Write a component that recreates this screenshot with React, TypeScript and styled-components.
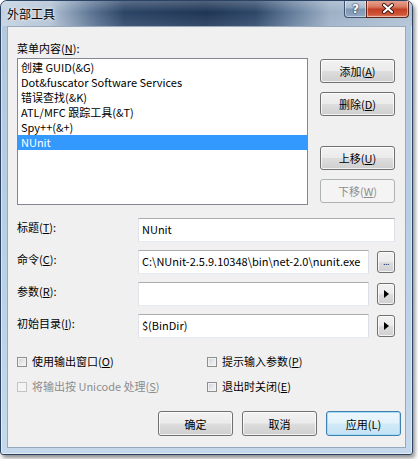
import React from "react";
import styled, { createGlobalStyle, css } from "styled-components";

const Global = createGlobalStyle`
  html, body { margin: 0; padding: 0; background: #ffffff; }
  body {
    font-family: "Noto Sans CJK SC", "Noto Sans", sans-serif;
    font-size: 11px;
    color: #000;
  }
  #root { width: 418px; height: 459px; }
`;

const Window = styled.div`
  box-sizing: border-box;
  width: 413px;
  height: 455px;
  border: 1px solid #2c4463;
  border-radius: 7px 7px 3px 3px;
  background: linear-gradient(to bottom, #b4c8dc 0%, #b9cfe6 55%, #c6d9ec 100%);
  box-shadow: 2px 3px 4px rgba(0, 0, 0, 0.45), inset 0 0 0 1px rgba(255, 255, 255, 0.5);
  display: flex;
  flex-direction: column;
  overflow: hidden;
`;

const TitleBar = styled.div`
  height: 25px;
  flex: none;
  display: flex;
  align-items: flex-start;
  padding-left: 6px;
  border-radius: 6px 6px 0 0;
  background:
    linear-gradient(to bottom, rgba(255, 255, 255, 0.22), rgba(255, 255, 255, 0) 45%, rgba(255, 255, 255, 0.1)),
    linear-gradient(to right, #c3d2e2 0%, #b0c1d4 12%, #5d7594 22%, #2c4466 30%, #1f3656 50%, #2e4769 62%, #5f7897 70%, #9cb0c6 80%, #b0c2d6 100%);
`;

const Caption = styled.div`
  font-size: 12px;
  line-height: 25px;
  color: #000;
  text-shadow: 0 0 5px rgba(255, 255, 255, 0.95), 0 0 2px rgba(255, 255, 255, 0.9);
`;

const CaptionButtons = styled.div`
  margin-left: auto;
  margin-right: 3px;
  margin-top: -1px;
  display: flex;
`;

const CaptionButton = styled.div<{ $close?: boolean }>`
  box-sizing: border-box;
  height: 18px;
  width: ${(p) => (p.$close ? "43px" : "23px")};
  display: flex;
  align-items: center;
  justify-content: center;
  border: 1px solid ${(p) => (p.$close ? "#5a2418" : "#3c5270")};
  border-top: none;
  border-radius: ${(p) => (p.$close ? "0 0 4px 0" : "0 0 0 4px")};
  margin-left: ${(p) => (p.$close ? "-1px" : "0")};
  box-shadow: inset 0 0 0 1px rgba(255, 255, 255, 0.45);
  color: #fff;
  font-family: "DejaVu Sans", sans-serif;
  font-weight: bold;
  font-size: 12px;
  text-shadow: 0 0 2px #1b2a3e, 0 0 1px #1b2a3e;
  ${(p) =>
    p.$close
      ? css`
          background: linear-gradient(to bottom, #e8a796 0%, #d87a62 40%, #c43f26 55%, #cf5536 85%, #e0866a 100%);
        `
      : css`
          background: linear-gradient(to bottom, #c6d3e1 0%, #a9bbcf 45%, #7f97b3 55%, #90a8c2 100%);
        `}
`;

const Client = styled.div`
  flex: 1;
  margin: 0 6px 6px 6px;
  border: 1px solid #97a9bf;
  background: #f0f0f0;
  padding: 13px 4px 11px 9px;
  display: flex;
  flex-direction: column;
`;

const SectionLabel = styled.div`
  height: 16px;
  line-height: 16px;
  font-size: 11px;
  margin-bottom: 2px;
`;

const Key = styled.span`
  text-decoration: underline;
  text-underline-offset: 1px;
`;

const TopRow = styled.div`
  display: flex;
  padding-right: 5px;
`;

const ListBox = styled.div`
  box-sizing: border-box;
  width: 291px;
  height: 147px;
  border: 1px solid #828790;
  background: #fff;
  padding-top: 1px;
`;

const ListItem = styled.div<{ $selected?: boolean }>`
  height: 15px;
  line-height: 15px;
  padding-left: 3px;
  font-size: 11px;
  white-space: nowrap;
  background: ${(p) => (p.$selected ? "#3399ff" : "transparent")};
  color: ${(p) => (p.$selected ? "#ffffff" : "#000000")};
`;

const SideButtons = styled.div`
  margin-left: 12px;
  width: 75px;
  display: flex;
  flex-direction: column;
  gap: 9px;
  padding: 1px 0 2px 0;
`;

const buttonFace = css`
  box-sizing: border-box;
  display: flex;
  align-items: center;
  justify-content: center;
  border: 1px solid #707070;
  border-radius: 3px;
  background: linear-gradient(to bottom, #f2f2f2 0%, #ebebeb 48%, #dddddd 52%, #cfcfcf 100%);
  box-shadow: inset 0 0 0 1px rgba(255, 255, 255, 0.75);
  font-size: 11px;
  color: #000;
  white-space: nowrap;
`;

const PushButton = styled.div<{ $disabled?: boolean; $default?: boolean; $push?: boolean }>`
  ${buttonFace}
  width: 75px;
  height: 24px;
  margin-top: ${(p) => (p.$push ? "auto" : "0")};
  ${(p) =>
    p.$disabled &&
    css`
      border-color: #adb2b5;
      background: #f4f4f4;
      box-shadow: none;
      color: #8d8d8d;
    `}
  ${(p) =>
    p.$default &&
    css`
      border-color: #3c7fb1;
      background: linear-gradient(to bottom, #edf7fd 0%, #e2f2fb 48%, #d2eaf8 52%, #c3e2f4 100%);
      box-shadow: inset 0 0 0 1px #a8dcf6;
    `}
`;

const Fields = styled.div`
  display: grid;
  grid-template-columns: 121px 1fr;
  row-gap: 8px;
  margin-top: 13px;
  padding-right: 5px;
`;

const FieldLabel = styled.div`
  padding-top: 2px;
  line-height: 15px;
  font-size: 11px;
  white-space: nowrap;
`;

const FieldRow = styled.div`
  display: flex;
  gap: 8px;
  padding-right: 1px;
`;

const TextBox = styled.div`
  box-sizing: border-box;
  flex: 1;
  height: 24px;
  border: 1px solid;
  border-color: #abadb3 #dbdfe6 #e3e9ef #e2e3ea;
  background: #fff;
  padding: 0 3px;
  line-height: 21px;
  font-size: 11px;
  white-space: nowrap;
  overflow: hidden;
`;

const SmallButton = styled.div`
  ${buttonFace}
  flex: none;
  width: 18px;
  height: 22px;
  margin-top: 1px;
  font-family: "DejaVu Sans", sans-serif;
  font-size: 8px;
  letter-spacing: -0.5px;
`;

const Checks = styled.div`
  display: grid;
  grid-template-columns: 190px 1fr;
  grid-auto-rows: 15px;
  row-gap: 10px;
  margin-top: 16px;
`;

const CheckItem = styled.div<{ $disabled?: boolean }>`
  display: flex;
  align-items: center;
  gap: 5px;
  font-size: 11px;
  white-space: nowrap;
  color: ${(p) => (p.$disabled ? "#8d8d8d" : "#000")};
`;

const CheckText = styled.span`
  line-height: 15px;
`;

const Box = styled.span<{ $disabled?: boolean }>`
  box-sizing: border-box;
  width: 10px;
  height: 10px;
  flex: none;
  border: 1px solid ${(p) => (p.$disabled ? "#c4c4c4" : "#8e8f8f")};
  background: ${(p) =>
    p.$disabled ? "#f4f4f4" : "linear-gradient(135deg, #cdd0d5 0%, #e4e6e9 50%, #f7f7f7 100%)"};
  box-shadow: inset 0 0 0 1px ${(p) => (p.$disabled ? "#f4f4f4" : "#f2f2f2")};
`;

const BottomRow = styled.div`
  margin-top: auto;
  display: flex;
  justify-content: flex-end;
  gap: 9px;
`;

const DialogButton = styled(PushButton)`
  height: 25px;
`;

const ButtonText = styled.span``;

const Arrow = () => (
  <svg width="5" height="8" viewBox="0 0 5 8">
    <polygon points="0,0 5,4 0,8" fill="#000" />
  </svg>
);

const CloseGlyph = () => (
  <svg width="14" height="11" viewBox="0 0 14 11">
    <path d="M3 2 L11 9 M11 2 L3 9" stroke="#3a1a12" strokeWidth="4" strokeLinecap="round" />
    <path d="M3 2 L11 9 M11 2 L3 9" stroke="#ffffff" strokeWidth="2.2" strokeLinecap="round" />
  </svg>
);

const items = [
  "创建 GUID(&G)",
  "Dot&fuscator Software Services",
  "错误查找(&K)",
  "ATL/MFC 跟踪工具(&T)",
  "Spy++(&+)",
  "NUnit",
];

export default function App() {
  return (
    <>
      <Global />
      <Window>
        <TitleBar>
          <Caption>外部工具</Caption>
          <CaptionButtons>
            <CaptionButton>?</CaptionButton>
            <CaptionButton $close>
              <CloseGlyph />
            </CaptionButton>
          </CaptionButtons>
        </TitleBar>
        <Client>
          <SectionLabel>
            菜单内容(<Key>N</Key>):
          </SectionLabel>
          <TopRow>
            <ListBox>
              {items.map((t) => (
                <ListItem key={t} $selected={t === "NUnit"}>
                  {t}
                </ListItem>
              ))}
            </ListBox>
            <SideButtons>
              <PushButton>
                <ButtonText>
                  添加(<Key>A</Key>)
                </ButtonText>
              </PushButton>
              <PushButton>
                <ButtonText>
                  删除(<Key>D</Key>)
                </ButtonText>
              </PushButton>
              <PushButton $push>
                <ButtonText>
                  上移(<Key>U</Key>)
                </ButtonText>
              </PushButton>
              <PushButton $disabled>
                <ButtonText>
                  下移(<Key>W</Key>)
                </ButtonText>
              </PushButton>
            </SideButtons>
          </TopRow>
          <Fields>
            <FieldLabel>
              标题(<Key>T</Key>):
            </FieldLabel>
            <FieldRow>
              <TextBox>NUnit</TextBox>
            </FieldRow>
            <FieldLabel>
              命令(<Key>C</Key>):
            </FieldLabel>
            <FieldRow>
              <TextBox>C:\NUnit-2.5.9.10348\bin\net-2.0\nunit.exe</TextBox>
              <SmallButton>...</SmallButton>
            </FieldRow>
            <FieldLabel>
              参数(<Key>R</Key>):
            </FieldLabel>
            <FieldRow>
              <TextBox />
              <SmallButton>
                <Arrow />
              </SmallButton>
            </FieldRow>
            <FieldLabel>
              初始目录(<Key>I</Key>):
            </FieldLabel>
            <FieldRow>
              <TextBox>$(BinDir)</TextBox>
              <SmallButton>
                <Arrow />
              </SmallButton>
            </FieldRow>
          </Fields>
          <Checks>
            <CheckItem>
              <Box />
              <CheckText>
                使用输出窗口(<Key>O</Key>)
              </CheckText>
            </CheckItem>
            <CheckItem>
              <Box />
              <CheckText>
                提示输入参数(<Key>P</Key>)
              </CheckText>
            </CheckItem>
            <CheckItem $disabled>
              <Box $disabled />
              <CheckText>
                将输出按 Unicode 处理(<Key>S</Key>)
              </CheckText>
            </CheckItem>
            <CheckItem>
              <Box />
              <CheckText>
                退出时关闭(<Key>E</Key>)
              </CheckText>
            </CheckItem>
          </Checks>
          <BottomRow>
            <DialogButton>确定</DialogButton>
            <DialogButton>取消</DialogButton>
            <DialogButton $default>应用(L)</DialogButton>
          </BottomRow>
        </Client>
      </Window>
    </>
  );
}
